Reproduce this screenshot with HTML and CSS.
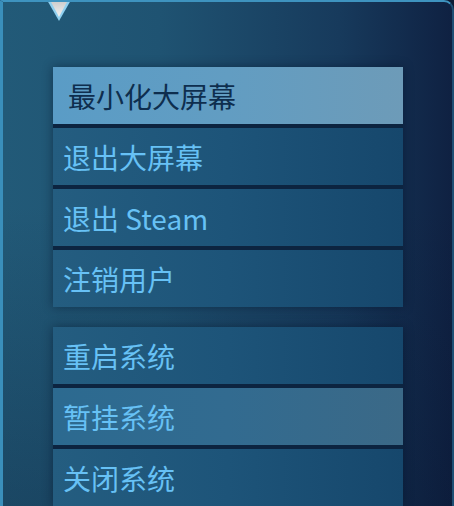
FILE: index.html
```html
<!DOCTYPE html>
<html lang="zh-CN">
<head>
    <meta charset="UTF-8">
    <meta name="viewport" content="width=device-width, initial-scale=1.0">
    <title>电源菜单</title>
    <link rel="stylesheet" href="styles.css">
</head>
<body>
    <div class="panel">
        <svg class="pointer" width="30" height="22" viewBox="0 0 30 22">
            <defs>
                <linearGradient id="tip" x1="0" y1="0" x2="0" y2="1">
                    <stop offset="0" stop-color="#c9c9c9"/>
                    <stop offset="1" stop-color="#f2f2f2"/>
                </linearGradient>
            </defs>
            <path d="M3 -2 L15 19 L27 -2 Z" fill="#8fd0f0"/>
            <path d="M6 -2 L15 15 L24 -2 Z" fill="url(#tip)"/>
        </svg>

        <div class="menu">
            <div class="group">
                <div class="item selected">最小化大屏幕</div>
                <div class="item">退出大屏幕</div>
                <div class="item">退出 Steam</div>
                <div class="item">注销用户</div>
            </div>
            <div class="group">
                <div class="item">重启系统</div>
                <div class="item hover">暂挂系统</div>
                <div class="item">关闭系统</div>
            </div>
        </div>
    </div>
</body>
</html>
```

FILE: styles.css
```css
html, body {
    margin: 0;
    height: 100%;
    background-color: #0d1b34;
    overflow: hidden;
}

body {
    font-family: "Noto Sans CJK SC", "Noto Sans", sans-serif;
}

.panel {
    position: relative;
    height: 100%;
    box-sizing: border-box;
    border-top: 2px solid #3e93bf;
    border-left: 3px solid #3a8fbb;
    border-right: 2px solid #1e4f74;
    border-top-right-radius: 10px;
    background:
        linear-gradient(180deg, rgba(0, 0, 0, 0) 40%, rgba(5, 15, 40, 0.25) 100%),
        linear-gradient(90deg, #225a78 0%, #1f5372 35%, #173a5c 75%, #0f2142 100%);
    padding: 65px 0 0 50px;
}

.pointer {
    position: absolute;
    top: 0;
    left: 41px;
}

.menu {
    display: flex;
    flex-direction: column;
    gap: 20px;
    width: 350px;
}

.group {
    display: flex;
    flex-direction: column;
    gap: 4px;
    background-color: #0c2440;
    box-shadow: 0 0 10px rgba(5, 15, 35, 0.45);
}

.item {
    height: 57px;
    box-sizing: border-box;
    display: flex;
    align-items: center;
    padding-left: 10px;
    font-size: 28px;
    color: #67c1f5;
    background: linear-gradient(90deg, #245d80 0%, #1d5479 50%, #16476c 100%);
}

.item.selected {
    padding-left: 15px;
    color: #0e2e4e;
    background: linear-gradient(90deg, #5a9cc6 0%, #629dc2 50%, #6d9bb8 100%);
}

.item.hover {
    background: linear-gradient(90deg, #2c6a90 0%, #326b90 50%, #3b6987 100%);
}
```
